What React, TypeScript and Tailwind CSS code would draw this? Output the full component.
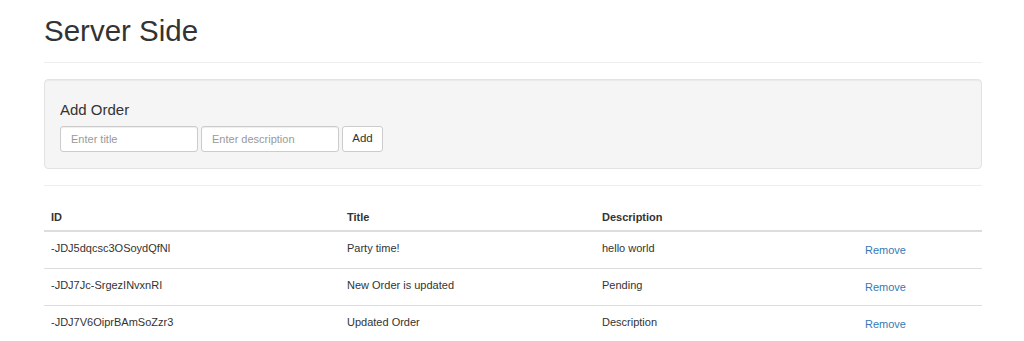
import React from "react";

// Datos de los pedidos
const orders = [
  { id: "-JDJ5dqcsc3OSoydQfNl", title: "Party time!", description: "hello world" },
  { id: "-JDJ7Jc-SrgezINvxnRI", title: "New Order is updated", description: "Pending" },
  { id: "-JDJ7V6OiprBAmSoZzr3", title: "Updated Order", description: "Description" },
];

export default function App() {
  return (
    <div className="min-h-[341px] bg-white font-['Liberation_Sans',Arial,sans-serif] text-[#333]">
      <div className="pl-[44px] pr-[42px]">
        {/* Header */}
        <div className="mb-[16px] border-b border-[#eee] pb-[15px]">
          <h1 className="mt-[15px] text-[29.5px] leading-[32px] font-normal text-[#333]">Server Side</h1>
        </div>

        {/* Formulario */}
        <div className="rounded-[4px] border border-[#e3e3e3] bg-[#f5f5f5] px-[15px] pt-[15px] pb-[16px] shadow-[inset_0_1px_1px_rgba(0,0,0,0.05)]">
          <h4 className="mt-[6px] mb-[8px] text-[15px] leading-[17px] font-normal text-[#333]">Add Order</h4>
          <div className="flex gap-[3px]">
            <input
              placeholder="Enter title"
              className="h-[26px] w-[138px] rounded-[3px] border border-[#ccc] bg-white px-[10px] text-[11px] text-[#555] shadow-[inset_0_1px_1px_rgba(0,0,0,0.075)] outline-none placeholder:text-[#999]"
            />
            <input
              placeholder="Enter description"
              className="h-[26px] w-[138px] rounded-[3px] border border-[#ccc] bg-white px-[10px] text-[11px] text-[#555] shadow-[inset_0_1px_1px_rgba(0,0,0,0.075)] outline-none placeholder:text-[#999]"
            />
            <button className="h-[26px] w-[41px] rounded-[3px] border border-[#ccc] bg-white text-[11.5px] text-[#333]">
              Add
            </button>
          </div>
        </div>

        <hr className="mt-[16px] mb-[15px] border-t border-[#eee]" />

        {/* Tabla */}
        <table className="w-full table-fixed border-collapse text-[11px] leading-[16px]">
          <thead>
            <tr className="border-b-2 border-[#ddd]">
              <th className="w-[296px] pt-[8px] pb-[5px] pl-[7px] text-left font-bold">ID</th>
              <th className="w-[255px] pt-[8px] pb-[5px] pl-[7px] text-left font-bold">Title</th>
              <th className="w-[263px] pt-[8px] pb-[5px] pl-[7px] text-left font-bold">Description</th>
              <th className="pt-[8px] pb-[5px] pl-[7px]"></th>
            </tr>
          </thead>
          <tbody>
            {orders.map((o, i) => (
              <tr key={o.id} className={i > 0 ? "border-t border-[#ddd]" : ""}>
                <td className="h-[37px] pt-[8px] pl-[7px] align-top">{o.id}</td>
                <td className="pt-[8px] pl-[7px] align-top">{o.title}</td>
                <td className="pt-[8px] pl-[7px] align-top">{o.description}</td>
                <td className="pt-[10px] pl-[7px] align-top">
                  <a className="cursor-pointer text-[#337ab7]">Remove</a>
                </td>
              </tr>
            ))}
          </tbody>
        </table>
      </div>
    </div>
  );
}
